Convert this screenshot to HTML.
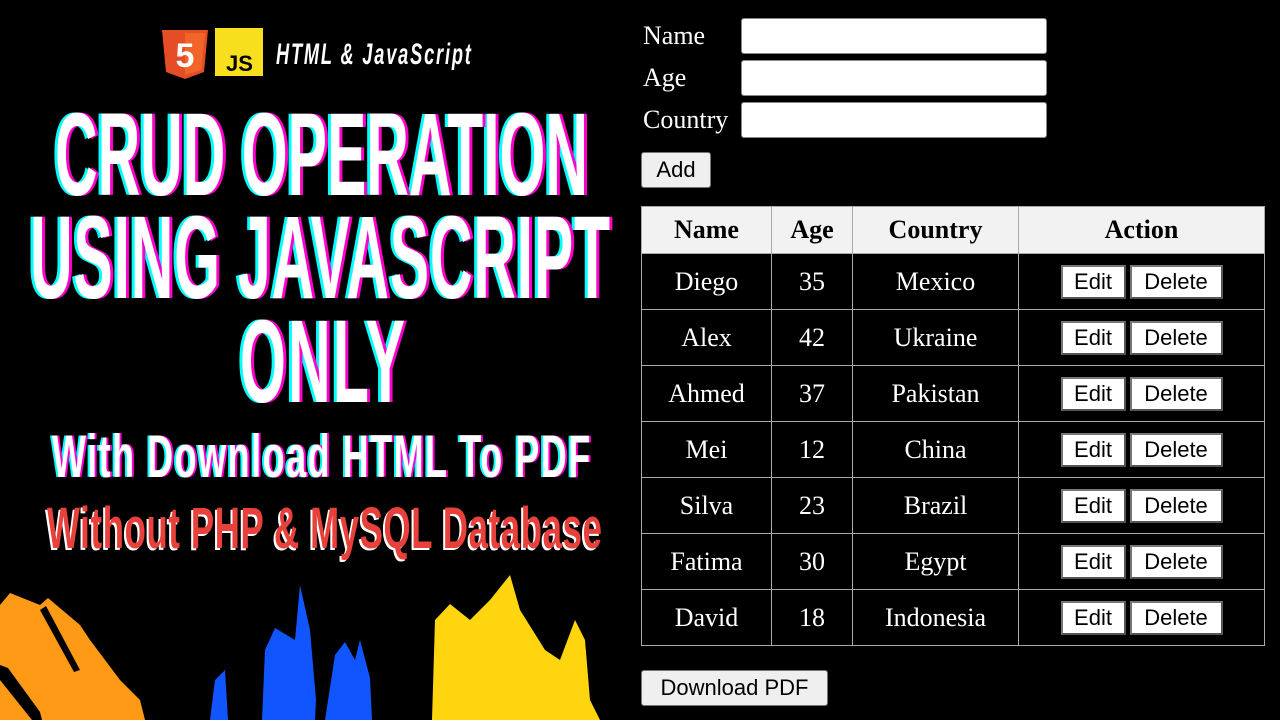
<!DOCTYPE html>
<html><head><meta charset="utf-8"><style>
body{margin:0;width:1280px;height:720px;background:#000;overflow:hidden;position:relative;font-family:"Liberation Serif",serif;color:#fff}
.a{position:absolute}
.lbl{position:absolute;left:643px;font-size:26px;line-height:30px}
.inp{position:absolute;left:741px;width:304px;height:34px;background:#fff;border:1px solid #888;border-radius:3px}
.btn{position:absolute;background:#efefef;border:1px solid #767676;border-radius:3px;color:#000;font-family:"Liberation Sans",sans-serif;font-size:22px;text-align:center;box-sizing:border-box}
table{position:absolute;left:641px;top:206px;width:624px;border-collapse:collapse}
td,th{border:1px solid #aaa;text-align:center;font-size:26px;padding:0}
th{background:#f2f2f2;color:#000;height:46px;font-weight:bold}
td{height:55px}
.e,.d{display:inline-block;background:#fff;color:#000;font-family:"Liberation Sans",sans-serif;font-size:22px;border:2px solid #555;border-top-color:#777;border-left-color:#777;height:30px;line-height:30px;vertical-align:middle}
.e{width:61px}.d{width:89px;margin-left:4px}
</style></head><body>
<svg class="a" style="left:0;top:0" width="640" height="720">
<polygon points="162,30 208,30 204,72 185,79 166,72" fill="#e44d26"/>
<polygon points="185,33 205,33 201,70 185,75" fill="#f16529"/>
<text x="185" y="67" font-family="Liberation Sans" font-weight="bold" font-size="34" fill="#fff" text-anchor="middle">5</text>
<rect x="215" y="28" width="48" height="48" fill="#f7df1e"/>
<text x="226" y="71" font-family="Liberation Sans" font-weight="bold" font-size="22" fill="#000">JS</text>
<text transform="translate(276,64) scale(0.7,1)" font-family="Liberation Sans" font-weight="bold" font-style="italic" font-size="30" fill="#fff" textLength="281" lengthAdjust="spacingAndGlyphs" letter-spacing="3">HTML &amp; JavaScript</text>
<g font-family="Liberation Sans" font-weight="bold" font-size="118" lengthAdjust="spacingAndGlyphs">
<text transform="translate(52,195) scale(0.5,1)" fill="#0ff" textLength="1066">CRUD OPERATION</text>
<text transform="translate(58,195) scale(0.5,1)" fill="#f0c" textLength="1066">CRUD OPERATION</text>
<text transform="translate(55,195) scale(0.5,1)" fill="#fff" textLength="1066">CRUD OPERATION</text>
<text transform="translate(27,298) scale(0.5,1)" fill="#0ff" textLength="1160">USING JAVASCRIPT</text>
<text transform="translate(33,298) scale(0.5,1)" fill="#f0c" textLength="1160">USING JAVASCRIPT</text>
<text transform="translate(30,298) scale(0.5,1)" fill="#fff" textLength="1160">USING JAVASCRIPT</text>
<text transform="translate(237,402) scale(0.5,1)" fill="#0ff" textLength="330">ONLY</text>
<text transform="translate(243,402) scale(0.5,1)" fill="#f0c" textLength="330">ONLY</text>
<text transform="translate(240,402) scale(0.5,1)" fill="#fff" textLength="330">ONLY</text>
</g>
<g font-family="Liberation Sans" font-weight="bold" font-size="60" lengthAdjust="spacingAndGlyphs">
<text transform="translate(50,477) scale(0.6,1)" fill="#0ff" textLength="897">With Download HTML To PDF</text>
<text transform="translate(54,477) scale(0.6,1)" fill="#f0c" textLength="897">With Download HTML To PDF</text>
<text transform="translate(52,477) scale(0.6,1)" fill="#fff" textLength="897">With Download HTML To PDF</text>
<text transform="translate(45,550) scale(0.6,1)" fill="#fff" textLength="925" font-size="58">Without PHP &amp; MySQL Database</text>
<text transform="translate(47,548) scale(0.6,1)" fill="#e8403a" textLength="925" font-size="58">Without PHP &amp; MySQL Database</text>
</g>
<polygon points="0,605 10,593 40,605 48,598 80,625 90,640 120,680 140,700 145,720 0,720" fill="#ff9a16"/>
<polygon points="0,665 8,668 40,712 42,720 32,720 0,680" fill="#000"/>
<polygon points="40,610 46,606 80,670 74,672" fill="#000"/>
<polygon points="210,720 215,680 225,670 228,720" fill="#1155ff"/>
<polygon points="262,720 265,650 275,628 295,640 300,585 310,630 316,700 315,720" fill="#1155ff"/>
<polygon points="325,720 335,655 345,642 355,660 360,640 370,678 372,720" fill="#1155ff"/>
<polygon points="432,720 435,620 450,604 470,620 490,600 510,575 520,610 545,650 560,660 575,620 585,640 590,700 600,720" fill="#ffd510"/>
</svg>
<div class="lbl" style="top:21px">Name</div>
<div class="lbl" style="top:63px">Age</div>
<div class="lbl" style="top:105px">Country</div>
<div class="inp" style="top:18px"></div>
<div class="inp" style="top:60px"></div>
<div class="inp" style="top:102px"></div>
<div class="btn" style="left:641px;top:152px;width:70px;height:36px;line-height:34px">Add</div>
<table>
<tr><th style="width:129px">Name</th><th style="width:80px">Age</th><th style="width:165px">Country</th><th>Action</th></tr>
<tr><td>Diego</td><td>35</td><td>Mexico</td><td><span class="e">Edit</span><span class="d">Delete</span></td></tr>
<tr><td>Alex</td><td>42</td><td>Ukraine</td><td><span class="e">Edit</span><span class="d">Delete</span></td></tr>
<tr><td>Ahmed</td><td>37</td><td>Pakistan</td><td><span class="e">Edit</span><span class="d">Delete</span></td></tr>
<tr><td>Mei</td><td>12</td><td>China</td><td><span class="e">Edit</span><span class="d">Delete</span></td></tr>
<tr><td>Silva</td><td>23</td><td>Brazil</td><td><span class="e">Edit</span><span class="d">Delete</span></td></tr>
<tr><td>Fatima</td><td>30</td><td>Egypt</td><td><span class="e">Edit</span><span class="d">Delete</span></td></tr>
<tr><td>David</td><td>18</td><td>Indonesia</td><td><span class="e">Edit</span><span class="d">Delete</span></td></tr>
</table>
<div class="btn" style="left:641px;top:670px;width:187px;height:36px;line-height:34px">Download PDF</div>
</body></html>
